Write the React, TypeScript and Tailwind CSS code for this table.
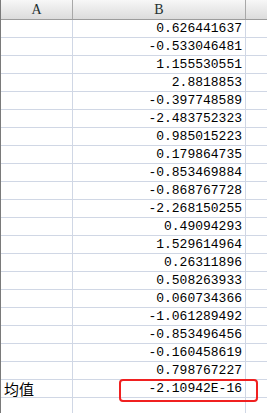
import React from 'react';

const values = [
  '0.626441637', '-0.533046481', '1.155530551', '2.8818853', '-0.397748589',
  '-2.483752323', '0.985015223', '0.179864735', '-0.853469884', '-0.868767728',
  '-2.268150255', '0.49094293', '1.529614964', '0.26311896', '0.508263933',
  '0.060734366', '-1.061289492', '-0.853496456', '-0.160458619', '0.798767227',
];

const mono = "font-['Liberation_Mono',monospace]";

const Row = ({ a, b }: { a?: string; b?: string }) => (
  <div className="flex h-[18px] border-b border-[#d0d7e5]">
    <div className="w-[72px] shrink-0 border-r border-[#d0d7e5] pl-[3px] flex items-center text-[15px] leading-none text-black font-['Noto_Sans_CJK_SC',sans-serif]">
      {a}
    </div>
    <div className={`w-[173px] shrink-0 border-r border-[#d0d7e5] pr-[3px] flex items-center justify-end text-[13px] leading-none text-black ${mono}`}>
      {b}
    </div>
    <div className="flex-1" />
  </div>
);

export default function App() {
  return (
    <div className="relative w-[267px] h-[413px] overflow-hidden bg-white border-l border-[#7a7a7a]">
      {/* column headers */}
      <div className="flex h-[20px] border-b border-[#9c9c9c] bg-gradient-to-b from-[#f7f7f7] to-[#dcdcdc] text-[14px] text-[#1f3030] font-['Liberation_Serif',serif]">
        <div className="w-[72px] shrink-0 border-r border-[#a8a8a8] flex items-center justify-center">A</div>
        <div className="w-[173px] shrink-0 border-r border-[#a8a8a8] flex items-center justify-center">B</div>
        <div className="flex-1" />
      </div>

      {values.map((v, i) => (
        <Row key={i} b={v} />
      ))}
      <Row a="均值" b="-2.10942E-16" />
      <Row />

      {/* highlight annotation */}
      <div className="absolute left-[118px] top-[379px] w-[139px] h-[23px] border-2 border-[#f02020] rounded-[4px]" />
    </div>
  );
}
